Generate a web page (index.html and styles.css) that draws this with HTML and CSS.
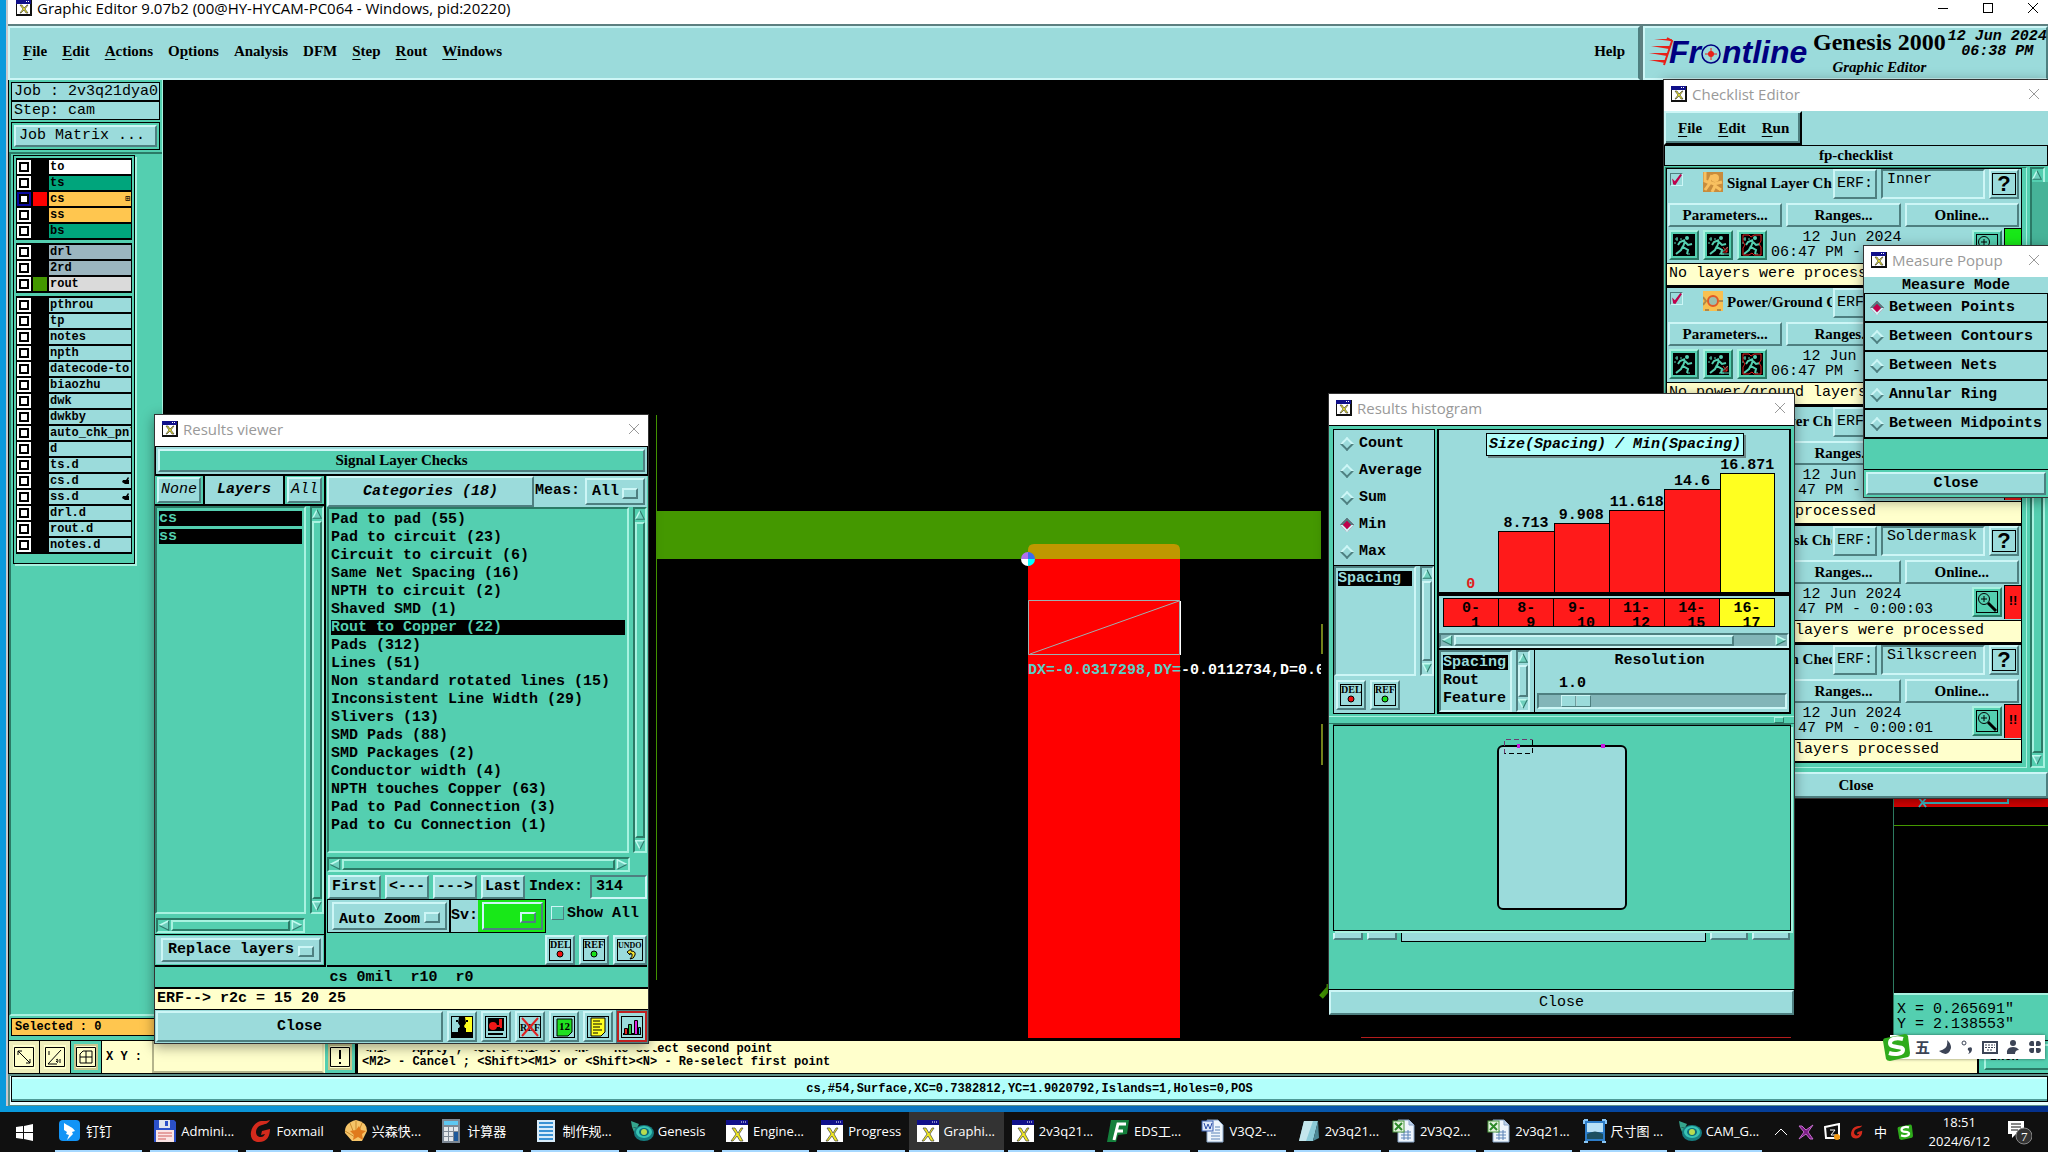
FILE: index.html
```html
<!DOCTYPE html>
<html lang="en">

<head>
    <meta charset="UTF-8">
    <meta name="viewport" content="width=device-width, initial-scale=1.0">
    <title>Graphic Editor 9.07b2</title>

    <link rel="stylesheet" href="styles.css">
</head>

<body>
    <!-- shared icons -->
    <svg class="defs" width="0" height="0">
        <symbol id="i-x" viewBox="0 0 16 16">
            <rect x="0" y="0" width="16" height="16" fill="#111" />
            <rect x="0" y="0" width="15" height="4" fill="#10108a" />
            <path d="M10 1h1v1h-1zM12 1h1v1h-1z" fill="#fff" />
            <rect x="1" y="4" width="13" height="10" fill="#fff" />
            <path d="M4 5h2l2 3 3-3h1L9 9l3 4h-2L8 10l-3 3H4l3-4z" fill="#e8e02a" stroke="#333" stroke-width=".6" />
        </symbol>
        <symbol id="i-close" viewBox="0 0 12 12">
            <path d="M1 1l10 10M11 1L1 11" fill="none" stroke="currentColor" stroke-width="1" />
        </symbol>
        <symbol id="i-up" viewBox="0 0 14 14">
            <path d="M7 1L13 13H1z" fill="#6fd0bd" />
            <path d="M7 1L1 13" fill="none" stroke="#c2fbf0" stroke-width="2" />
            <path d="M7 1L13 13H1" fill="none" stroke="#2f7a6c" stroke-width="1.5" />
        </symbol>
        <symbol id="i-down" viewBox="0 0 14 14">
            <path d="M1 1h12L7 13z" fill="#6fd0bd" />
            <path d="M7 13L1 1h12" fill="none" stroke="#c2fbf0" stroke-width="2" />
            <path d="M13 1L7 13" fill="none" stroke="#2f7a6c" stroke-width="1.5" />
        </symbol>
        <symbol id="i-left" viewBox="0 0 14 14">
            <path d="M1 7L13 1v12z" fill="#6fd0bd" />
            <path d="M1 7L13 1" fill="none" stroke="#c2fbf0" stroke-width="2" />
            <path d="M1 7l12 6V1" fill="none" stroke="#2f7a6c" stroke-width="1.5" />
        </symbol>
        <symbol id="i-right" viewBox="0 0 14 14">
            <path d="M1 1l12 6L1 13z" fill="#6fd0bd" />
            <path d="M13 7L1 1v12" fill="none" stroke="#c2fbf0" stroke-width="2" />
            <path d="M1 13l12-6" fill="none" stroke="#2f7a6c" stroke-width="1.5" />
        </symbol>
        <symbol id="i-run" viewBox="0 0 22 22">
            <rect width="22" height="22" fill="#000" />
            <circle cx="14" cy="4" r="2" fill="#54cfb0" />
            <path d="M12 6l-5 2-2 3M12 7l-2 6 5 3-1 4M10 12l-2 4-5 4M12 8l3 3 4-1" fill="none" stroke="#54cfb0" stroke-width="2" />
            <path d="M2 5h3M4 3v4M1 9h2M7 5h2M14 20h3" stroke="#54cfb0" stroke-width="1" />
        </symbol>
        <symbol id="i-run-part" viewBox="0 0 22 22">
            <use href="#i-run" width="22" height="22" />
            <path d="M12 20h10M13 20l8-7" stroke="#54cfb0" stroke-width="1" />
            <path d="M16 13l4 5M20 13v5h-4" fill="none" stroke="#e02020" stroke-width="1" />
        </symbol>
        <symbol id="i-run-frame" viewBox="0 0 22 22">
            <use href="#i-run" width="22" height="22" />
            <path d="M2 1h6l2 2 3-2h7v6l-2 3 2 3v8h-7l-2-2-3 2H2v-7l2-3-2-3z" fill="none" stroke="#e02020" stroke-width="1" />
        </symbol>
        <symbol id="i-mag" viewBox="0 0 22 22">
            <rect x=".5" y=".5" width="21" height="21" fill="#54cfb0" stroke="#000" />
            <circle cx="8" cy="8" r="5.500" fill="none" stroke="#000" />
            <path d="M5 8h6M8 5v6" stroke="#000" />
            <path d="M12 12l8 8" stroke="#000" stroke-width="3" />
        </symbol>
        <symbol id="i-del" viewBox="0 0 22 22">
            <rect x=".5" y=".5" width="21" height="21" fill="none" stroke="#000" />
            <text x="1" y="9" font-size="10">DEL</text>
            <circle cx="11" cy="15" r="3" fill="#f01010" stroke="#000" />
        </symbol>
        <symbol id="i-ref" viewBox="0 0 22 22">
            <rect x=".5" y=".5" width="21" height="21" fill="none" stroke="#000" />
            <text x="1" y="9" font-size="10">REF</text>
            <circle cx="11" cy="15" r="3" fill="#18e018" stroke="#000" />
        </symbol>
        <symbol id="i-hand" viewBox="0 0 8 8">
            <path d="M1 3h3l2-3 1 1-1 2h1v4H3L0 5z" fill="#000" />
        </symbol>
        <symbol id="i-xapp" viewBox="0 0 24 24">
            <rect x="1" y="1" width="22" height="22" fill="#fff" />
            <rect x="1" y="1" width="22" height="5" fill="#10108a" />
            <path d="M16 3h1M18 3h1M20 3h1" stroke="#fff" />
            <path d="M7 9h3l3 5 3-5h2l-4 6 4 7h-3l-3-5-4 5H6l5-7z" fill="#f0e820" stroke="#444" stroke-width=".7" />
        </symbol>
        <symbol id="i-fox" viewBox="0 0 24 24">
            <path d="M21 1c-2 4-5 4-8 5-4 1-6 4-6 7 0 3 2 5 5 5 2 0 3-1 4-3l-4 1 1-4 8-2c0 7-3 13-11 13C4 23 1 19 2 13 3 7 7 3 12 2c4 0 7 0 9-1z" fill="#d42a1c" />
        </symbol>
        <symbol id="i-gen" viewBox="0 0 24 24">
            <path d="M1 2l8 3-2 4-5-1zM2 8l6 2-4 3z" fill="#35a58c" />
            <ellipse cx="14" cy="14" rx="10" ry="8" fill="#167d80" />
            <ellipse cx="14" cy="13" rx="8" ry="6" fill="#38c4b4" />
            <ellipse cx="14" cy="13" rx="5" ry="4" fill="#0d6a78" />
            <circle cx="14" cy="13" r="3" fill="#b8dc50" />
        </symbol>
        <symbol id="i-xls" viewBox="0 0 24 24">
            <path d="M6 1h11l5 5v17H6z" fill="#eef5fc" stroke="#8aa6c8" />
            <path d="M17 1v5h5" fill="#bdd0e8" stroke="#8aa6c8" />
            <path d="M9 13h10M9 16h10M9 19h10M12 11v10M16 11v10" stroke="#5c84b8" />
            <rect x="1" y="2" width="11" height="11" fill="#e4f3e0" stroke="#4d9a40" />
            <path d="M3 4l7 7M10 4l-7 7" stroke="#2d8a2a" stroke-width="2" />
        </symbol>
        <symbol id="i-sogou" viewBox="0 0 28 28">
            <path d="M4 5l19-4q2 0 3 2l2 17q0 3-2 4L8 28q-3 0-4-2L1 8q0-3 3-3z" fill="#2fab1c" />
            <path d="M21 6C14 4 8 6 8 10c0 6 13 2 13 7 0 4-8 5-14 3" fill="none" stroke="#fff" stroke-width="4" />
        </symbol>
    </svg>

    <main class="desktop">
        <section class="app">
            <header class="app-title">
                <svg class="ico16"><use href="#i-x" /></svg>
                <h1>Graphic Editor 9.07b2 (00@HY-HYCAM-PC064 - Windows, pid:20220)</h1>
                <div class="win-controls">
                    <button aria-label="Minimize"><svg width="12" height="12"><path d="M1 6.500h10" stroke="#000" /></svg></button>
                    <button aria-label="Maximize"><svg width="12" height="12"><rect x="1.500" y="1.500" width="9" height="9" fill="none" stroke="#000" /></svg></button>
                    <button aria-label="Close"><svg width="12" height="12"><use href="#i-close" /></svg></button>
                </div>
            </header>

            <div class="menubar">
                <nav class="menus">
                    <button><u>F</u>ile</button>
                    <button><u>E</u>dit</button>
                    <button><u>A</u>ctions</button>
                    <button>O<u>p</u>tions</button>
                    <button>Analysis</button>
                    <button>DFM</button>
                    <button><u>S</u>tep</button>
                    <button><u>R</u>out</button>
                    <button><u>W</u>indows</button>
                    <button class="help">Help</button>
                </nav>
                <div class="brand">
                    <svg class="logo" width="162" height="32" viewBox="0 0 162 32">
                        <path d="M5 4h18l-1 2zM2 11h19l-1 3zM0 18h19l-1 3zM0 25h17l-1 3z" fill="#e82018" />
                        <path d="M18 3l5 3-8 24" fill="none" stroke="#e82018" stroke-width="2" />
                        <g class="logo-text">
                            <text x="20" y="28">Fr</text>
                            <text x="73" y="28">ntline</text>
                        </g>
                        <circle cx="62" cy="19" r="9" fill="#9bdbdb" stroke="#000080" stroke-width="1.5" />
                        <path d="M62 13v12M56 19h12" stroke="#e82018" />
                        <circle cx="62" cy="19" r="3" fill="#e82018" />
                    </svg>
                    <div class="product">
                        <strong>Genesis 2000</strong>
                        <em>Graphic Editor</em>
                    </div>
                    <time class="clock">12 Jun 2024<br>06:38 PM</time>
                </div>
            </div>

            <div class="workspace">
                <aside class="sidebar">
                    <div class="job">
                        <p>Job : 2v3q21dya0</p>
                        <p>Step: cam</p>
                        <div class="job-matrix"><button>Job Matrix ...</button></div>
                    </div>
                    <div class="layers-pane">
                        <div class="layers">
                            <ul>
                                <li class="white"><input type="checkbox" id="l1"><i></i><label for="l1">to</label></li>
                                <li class="mask"><input type="checkbox" id="l2"><i></i><label for="l2">ts</label></li>
                                <li class="copper work"><input type="checkbox" id="l3" checked><i class="red"></i><label for="l3">cs<span>⊞</span></label></li>
                                <li class="copper"><input type="checkbox" id="l4"><i></i><label for="l4">ss</label></li>
                                <li class="mask"><input type="checkbox" id="l5"><i></i><label for="l5">bs</label></li>
                            </ul>
                            <ul>
                                <li class="drill"><input type="checkbox" id="l6"><i></i><label for="l6">drl</label></li>
                                <li class="drill"><input type="checkbox" id="l7"><i></i><label for="l7">2rd</label></li>
                                <li class="rout"><input type="checkbox" id="l8"><i class="green"></i><label for="l8">rout</label></li>
                            </ul>
                            <ul>
                                <li><input type="checkbox" id="l9"><i></i><label for="l9">pthrou</label></li>
                                <li><input type="checkbox" id="l10"><i></i><label for="l10">tp</label></li>
                                <li><input type="checkbox" id="l11"><i></i><label for="l11">notes</label></li>
                                <li><input type="checkbox" id="l12"><i></i><label for="l12">npth</label></li>
                                <li><input type="checkbox" id="l13"><i></i><label for="l13">datecode-to</label></li>
                                <li><input type="checkbox" id="l14"><i></i><label for="l14">biaozhu</label></li>
                                <li><input type="checkbox" id="l15"><i></i><label for="l15">dwk</label></li>
                                <li><input type="checkbox" id="l16"><i></i><label for="l16">dwkby</label></li>
                                <li><input type="checkbox" id="l17"><i></i><label for="l17">auto_chk_pnl</label></li>
                                <li><input type="checkbox" id="l18"><i></i><label for="l18">d</label></li>
                                <li><input type="checkbox" id="l19"><i></i><label for="l19">ts.d</label></li>
                                <li><input type="checkbox" id="l20"><i></i><label for="l20">cs.d<svg width="8" height="8"><use href="#i-hand" /></svg></label></li>
                                <li><input type="checkbox" id="l21"><i></i><label for="l21">ss.d<svg width="8" height="8"><use href="#i-hand" /></svg></label></li>
                                <li><input type="checkbox" id="l22"><i></i><label for="l22">drl.d</label></li>
                                <li><input type="checkbox" id="l23"><i></i><label for="l23">rout.d</label></li>
                                <li><input type="checkbox" id="l24"><i></i><label for="l24">notes.d</label></li>
                            </ul>
                        </div>
                    </div>
                    <p class="selected">Selected : 0</p>
                </aside>

                <div class="canvas">
                    <svg width="100%" height="100%">
                        <path d="M493.500 335v565" stroke="#449800" />
                        <rect x="493" y="431" width="665" height="48" fill="#449800" />
                        <path d="M865 479v-9q0-6 6-6h140q6 0 6 6v9z" fill="#bf9800" />
                        <rect x="865" y="479" width="152" height="479" fill="#f00" />
                        <path d="M865.500 520.500h151v54h-151z M867 574L1016 521" fill="none" stroke="#9fb0b0" />
                        <path d="M1017.500 521v54" stroke="#fff" />
                        <path d="M865 479h-7a7 7 0 0 1 7-7z" fill="#b070f0" />
                        <path d="M865 479v-7a7 7 0 0 1 7 7z" fill="#3c6cf0" />
                        <path d="M865 479v7a7 7 0 0 1-7-7z" fill="#fff" />
                        <path d="M865 479h7a7 7 0 0 1-7 7z" fill="#00ffff" />
                        <svg x="865" y="570" width="293" height="40">
                            <text class="measure" x="0" y="24"><tspan fill="#5ccfc8">DX=-0.0317298,DY=</tspan><tspan fill="#fff">-0.0112734,D=0.0</tspan></text>
                        </svg>
                        <path d="M1159 544v30M1159 644v41" stroke="#7b8c1c" stroke-width="2" />
                        <path d="M1158 917l8-9v-4" fill="none" stroke="#449800" stroke-width="5" />
                        <path d="M1198 957.500h430" stroke="#b41c1c" />
                    </svg>
                </div>

                <aside class="overview">
                    <svg class="map" width="100%" height="100%">
                        <rect x="0" y="712" width="100%" height="15" fill="#e00000" />
                        <path d="M28 723h86v-6M25 718l7 9M32 718l-7 9" fill="none" stroke="#3fc0cc" stroke-width="2" />
                        <path d="M0 745.500h155" stroke="#449800" />
                    </svg>
                    <p class="coords">X = 0.265691"<br>Y = 2.138553"</p>
                </aside>
            </div>

            <div class="prompt">
                <button class="tool" aria-label="Snap"><svg width="20" height="20"><path d="M.5.5h19v19H.5zM4 4l12 12M4 8V4h4M16 12v4h-4" fill="none" stroke="#000" /></svg></button>
                <button class="tool" aria-label="Angle"><svg width="20" height="20"><path d="M.5.5h19v19H.5zM3 17L16 3M3 17h9M4 4v4M11 13q2-2 2 1t-2 0M15 12v4" fill="none" stroke="#000" /></svg></button>
                <button class="tool on" aria-label="Grid"><svg width="20" height="20"><path d="M.5.5h19v19H.5zM7 4h9v12H4V7zM10 4v12M4 10h12" fill="none" stroke="#000" /></svg></button>
                <label for="xy">X Y :</label>
                <input type="text" id="xy">
                <button class="tool on" aria-label="Alert"><svg width="20" height="20"><path d="M.5.5h19v19H.5z" fill="none" stroke="#000" /><path d="M10 3v9M10 15v2" stroke="#000" stroke-width="2" /></svg></button>
                <p class="message">&lt;M1&gt; - Apply ; &lt;Ctrl&gt;&lt;M1&gt; or &lt;N&gt; - Re-select second point<br>&lt;M2&gt; - Cancel ; &lt;Shift&gt;&lt;M1&gt; or &lt;Shift&gt;&lt;N&gt; - Re-select first point</p>
                <div class="units"><select aria-label="Units"><option>Inch</option></select></div>
            </div>

            <div class="status"><p>cs,#54,Surface,XC=0.7382812,YC=1.9020792,Islands=1,Holes=0,POS</p></div>
        </section>

        <section class="window viewer">
            <header class="win-title">
                <svg class="ico16"><use href="#i-x" /></svg>
                <h2>Results viewer</h2>
                <button aria-label="Close"><svg width="12" height="12"><use href="#i-close" /></svg></button>
            </header>
            <div class="viewer-head"><h3>Signal Layer Checks</h3></div>
            <div class="viewer-body">
                <div class="col-layers">
                    <div class="head">
                        <span><button class="thin">None</button></span>
                        <em>Layers</em>
                        <span><button class="thin">All</button></span>
                    </div>
                    <div class="scroller">
                        <ul class="list">
                            <li class="sel">cs</li>
                            <li class="sel">ss</li>
                        </ul>
                        <div class="vscroll"><svg><use href="#i-up" /></svg><b></b><svg><use href="#i-down" /></svg></div>
                    </div>
                    <div class="hscroll"><svg><use href="#i-left" /></svg><b></b><svg><use href="#i-right" /></svg></div>
                    <div class="replace">
                        <span class="opt"><select aria-label="Layer action"><option>Replace layers</option></select></span>
                    </div>
                </div>
                <div class="col-cats">
                    <div class="head">
                        <button class="cats">Categories (18)</button>
                        <label for="meas">Meas:</label>
                        <span class="opt"><select id="meas"><option>All</option></select></span>
                    </div>
                    <div class="scroller">
                        <ul class="list">
                            <li>Pad to pad (55)</li>
                            <li>Pad to circuit (23)</li>
                            <li>Circuit to circuit (6)</li>
                            <li>Same Net Spacing (16)</li>
                            <li>NPTH to circuit (2)</li>
                            <li>Shaved SMD (1)</li>
                            <li class="sel">Rout to Copper (22)</li>
                            <li>Pads (312)</li>
                            <li>Lines (51)</li>
                            <li>Non standard rotated lines (15)</li>
                            <li>Inconsistent Line Width (29)</li>
                            <li>Slivers (13)</li>
                            <li>SMD Pads (88)</li>
                            <li>SMD Packages (2)</li>
                            <li>Conductor width (4)</li>
                            <li>NPTH touches Copper (63)</li>
                            <li>Pad to Pad Connection (3)</li>
                            <li>Pad to Cu Connection (1)</li>
                        </ul>
                        <div class="vscroll"><svg><use href="#i-up" /></svg><b></b><svg><use href="#i-down" /></svg></div>
                    </div>
                    <div class="hscroll"><svg><use href="#i-left" /></svg><b></b><svg><use href="#i-right" /></svg></div>
                    <div class="nav">
                        <button>First</button>
                        <button>&lt;---</button>
                        <button>---&gt;</button>
                        <button>Last</button>
                        <label for="index">Index:</label>
                        <input type="text" id="index" value="314">
                    </div>
                    <div class="zoom">
                        <span class="opt"><select aria-label="Zoom mode"><option>Auto Zoom</option></select></span>
                        <label for="sv">Sv:</label>
                        <span class="opt lime"><select id="sv"><option></option></select></span>
                        <input type="checkbox" id="showall"><label class="plain" for="showall">Show All</label>
                    </div>
                    <div class="edits">
                        <button aria-label="Delete"><svg width="22" height="22"><use href="#i-del" /></svg></button>
                        <button aria-label="Reference"><svg width="22" height="22"><use href="#i-ref" /></svg></button>
                        <button aria-label="Undo"><svg width="26" height="22"><rect x=".5" y=".5" width="25" height="21" fill="none" stroke="#000" /><text x="1" y="9" font-size="8">UNDO</text><path d="M10 13l4-3v2q5 0 4 4t-5 4q3-3 2-5l-2-1v2z" fill="#f0e030" stroke="#000" /></svg></button>
                    </div>
                </div>
            </div>
            <p class="info">cs 0mil&nbsp; r10&nbsp; r0</p>
            <p class="erf-line">ERF--&gt; r2c = 15 20 25</p>
            <div class="viewer-foot">
                <button class="wide">Close</button>
                <button aria-label="Compare"><svg width="22" height="22"><rect width="22" height="22" /><path d="M1 1h7l-1 6 2 3-1 2H7v4H1z" fill="#9bdbdb" /><path d="M21 1h-7l1 6-2 3 1 2h1v4h6z" fill="#ffff20" /><path d="M5 5h2M15 5h2" stroke="#000" stroke-width="2" /></svg></button>
                <button aria-label="Snapshot"><svg width="22" height="22"><rect x=".5" y=".5" width="21" height="21" fill="#9bdbdb" stroke="#000" /><rect x="3" y="2" width="16" height="13" /><circle cx="8" cy="10" r="4" fill="#f01818" /><path d="M11 10h4V4h1v8" fill="none" stroke="#f01818" stroke-width="2" /><path d="M3 18h15" stroke="#000" stroke-width="2" /></svg></button>
                <button aria-label="Clear reference"><svg width="22" height="22"><rect x=".5" y=".5" width="21" height="21" fill="none" stroke="#000" /><text x="1" y="15" font-size="10">REF</text><path d="M3 2l16 18M19 2L3 20" stroke="#e02020" stroke-width="2" /></svg></button>
                <button aria-label="Count"><svg width="22" height="22"><rect x=".5" y=".5" width="21" height="21" fill="none" stroke="#000" /><path d="M4 3h15v13l-4 4H4z" fill="#20e020" stroke="#000" /><text x="6" y="14" font-size="11" font-weight="bold">12</text></svg></button>
                <button aria-label="Notes"><svg width="22" height="22"><rect x=".5" y=".5" width="21" height="21" fill="none" stroke="#000" /><path d="M4 2h14v14l-4 4H4z" fill="#ffff20" stroke="#000" /><path d="M6 5h7M6 8h9M6 11h7M6 14h9M6 17h5" stroke="#000" /></svg></button>
                <button class="active" aria-label="Histogram"><svg width="22" height="22"><rect x=".5" y=".5" width="21" height="21" fill="#9bdbdb" stroke="#000" /><path d="M2 18h18" stroke="#000" stroke-width="2" /><path d="M3.500 12.500h3v6h-3z" fill="#e02020" stroke="#000" /><path d="M7.500 8.500h3v10h-3z" fill="#20c040" stroke="#000" /><path d="M13.500 4.500h3v14h-3z" fill="#e020e0" stroke="#000" /><path d="M17.500 11.500h2v7h-2z" fill="#30c8e0" stroke="#000" /></svg></button>
            </div>
        </section>

        <section class="window checklist">
            <header class="win-title">
                <svg class="ico16"><use href="#i-x" /></svg>
                <h2>Checklist Editor</h2>
                <button aria-label="Close"><svg width="12" height="12"><use href="#i-close" /></svg></button>
            </header>
            <nav class="check-menu">
                <div>
                    <button><u>F</u>ile</button>
                    <button><u>E</u>dit</button>
                    <button><u>R</u>un</button>
                </div>
            </nav>
            <h3 class="check-name">fp-checklist</h3>
            <div class="check-body">
                <div class="checks">
                    <article class="check">
                        <div class="row-a">
                            <input type="checkbox" id="c1" checked>
                            <svg width="20" height="20"><rect width="20" height="20" fill="#c88c3c" /><path d="M2 0v9l5 2-5 7M9 3l-3 7 5 2 8-2M9 20l3-6 6 4" fill="none" stroke="#f8c060" stroke-width="3" /><circle cx="12" cy="6" r="4" fill="#f8c060" /></svg>
                            <label for="c1">Signal Layer Checks</label>
                            <button>ERF:</button>
                            <input type="text" aria-label="ERF model" value="Inner">
                            <button class="q"><span>?</span></button>
                        </div>
                        <div class="row-b"><button>Parameters...</button><button>Ranges...</button><button>Online...</button></div>
                        <div class="row-c">
                            <button aria-label="Run all"><svg><use href="#i-run" /></svg></button>
                            <button aria-label="Run on features"><svg><use href="#i-run-part" /></svg></button>
                            <button aria-label="Run inside profile"><svg><use href="#i-run-frame" /></svg></button>
                            <p>12 Jun 2024<br>06:47 PM - 0:00:01</p>
                            <button aria-label="View results"><svg><use href="#i-mag" /></svg></button>
                            <span class="flag ok"></span>
                        </div>
                        <p class="report">No layers were processed</p>
                    </article>
                    <article class="check">
                        <div class="row-a">
                            <input type="checkbox" id="c2" checked>
                            <svg width="20" height="20"><rect width="20" height="20" fill="#f8c050" /><circle cx="10" cy="10" r="5" fill="#9bbfae" stroke="#e05a28" stroke-width="2" /><path d="M0 6l3 4-3 4M16 10h4M2 19h4M14 19h4" fill="none" stroke="#b08848" stroke-width="2" /></svg>
                            <label for="c2">Power/Ground Checks</label>
                            <button>ERF:</button>
                            <input type="text" aria-label="ERF model" value="Inner">
                            <button class="q"><span>?</span></button>
                        </div>
                        <div class="row-b"><button>Parameters...</button><button>Ranges...</button><button>Online...</button></div>
                        <div class="row-c">
                            <button aria-label="Run all"><svg><use href="#i-run" /></svg></button>
                            <button aria-label="Run on features"><svg><use href="#i-run-part" /></svg></button>
                            <button aria-label="Run inside profile"><svg><use href="#i-run-frame" /></svg></button>
                            <p>12 Jun 2024<br>06:47 PM - 0:00:01</p>
                            <button aria-label="View results"><svg><use href="#i-mag" /></svg></button>
                            <span class="flag ok"></span>
                        </div>
                        <p class="report">No power/ground layers</p>
                    </article>
                    <article class="check">
                        <div class="row-a">
                            <input type="checkbox" id="c3" checked>
                            <svg width="20" height="20"><rect width="20" height="20" fill="#c88c3c" /></svg>
                            <label for="c3">Signal Layer Checks</label>
                            <button>ERF:</button>
                            <input type="text" aria-label="ERF model" value="Outer">
                            <button class="q"><span>?</span></button>
                        </div>
                        <div class="row-b"><button>Parameters...</button><button>Ranges...</button><button>Online...</button></div>
                        <div class="row-c">
                            <button aria-label="Run all"><svg><use href="#i-run" /></svg></button>
                            <button aria-label="Run on features"><svg><use href="#i-run-part" /></svg></button>
                            <button aria-label="Run inside profile"><svg><use href="#i-run-frame" /></svg></button>
                            <p>12 Jun 2024<br>06:47 PM - 0:00:05</p>
                            <button aria-label="View results"><svg><use href="#i-mag" /></svg></button>
                            <span class="flag bad">!!</span>
                        </div>
                        <p class="report">2 layers were processed</p>
                    </article>
                    <article class="check">
                        <div class="row-a">
                            <input type="checkbox" id="c4" checked>
                            <svg width="20" height="20"><rect width="20" height="20" fill="#00a57c" /></svg>
                            <label for="c4">Solder Mask Checks</label>
                            <button>ERF:</button>
                            <input type="text" aria-label="ERF model" value="Soldermask">
                            <button class="q"><span>?</span></button>
                        </div>
                        <div class="row-b"><button>Parameters...</button><button>Ranges...</button><button>Online...</button></div>
                        <div class="row-c">
                            <button aria-label="Run all"><svg><use href="#i-run" /></svg></button>
                            <button aria-label="Run on features"><svg><use href="#i-run-part" /></svg></button>
                            <button aria-label="Run inside profile"><svg><use href="#i-run-frame" /></svg></button>
                            <p>12 Jun 2024<br>06:47 PM - 0:00:03</p>
                            <button aria-label="View results"><svg><use href="#i-mag" /></svg></button>
                            <span class="flag bad">!!</span>
                        </div>
                        <p class="report">2 solder mask layers were processed</p>
                    </article>
                    <article class="check">
                        <div class="row-a">
                            <input type="checkbox" id="c5" checked>
                            <svg width="20" height="20"><rect width="20" height="20" fill="#fff" /></svg>
                            <label for="c5">Silk Screen Checks</label>
                            <button>ERF:</button>
                            <input type="text" aria-label="ERF model" value="Silkscreen">
                            <button class="q"><span>?</span></button>
                        </div>
                        <div class="row-b"><button>Parameters...</button><button>Ranges...</button><button>Online...</button></div>
                        <div class="row-c">
                            <button aria-label="Run all"><svg><use href="#i-run" /></svg></button>
                            <button aria-label="Run on features"><svg><use href="#i-run-part" /></svg></button>
                            <button aria-label="Run inside profile"><svg><use href="#i-run-frame" /></svg></button>
                            <p>12 Jun 2024<br>06:47 PM - 0:00:01</p>
                            <button aria-label="View results"><svg><use href="#i-mag" /></svg></button>
                            <span class="flag bad">!!</span>
                        </div>
                        <p class="report">2 silk screen layers processed</p>
                    </article>
                </div>
                <div class="vscroll"><svg><use href="#i-up" /></svg><b class="start"></b><b></b><svg><use href="#i-down" /></svg></div>
            </div>
            <button class="wide">Close</button>
        </section>

        <section class="window measure-popup">
            <header class="win-title">
                <svg class="ico16"><use href="#i-x" /></svg>
                <h2>Measure Popup</h2>
                <button aria-label="Close"><svg width="12" height="12"><use href="#i-close" /></svg></button>
            </header>
            <h3>Measure Mode</h3>
            <label><input type="radio" name="mode" checked>Between Points</label>
            <label><input type="radio" name="mode">Between Contours</label>
            <label><input type="radio" name="mode">Between Nets</label>
            <label><input type="radio" name="mode">Annular Ring</label>
            <label><input type="radio" name="mode">Between Midpoints</label>
            <div class="popup-foot"><button>Close</button></div>
        </section>

        <section class="window histogram">
            <header class="win-title">
                <svg class="ico16"><use href="#i-x" /></svg>
                <h2>Results histogram</h2>
                <button aria-label="Close"><svg width="12" height="12"><use href="#i-close" /></svg></button>
            </header>
            <div class="hist-top">
                <div class="hist-side">
                    <div class="stats">
                        <label><input type="radio" name="stat">Count</label>
                        <label><input type="radio" name="stat">Average</label>
                        <label><input type="radio" name="stat">Sum</label>
                        <label><input type="radio" name="stat" checked>Min</label>
                        <label><input type="radio" name="stat">Max</label>
                    </div>
                    <div class="scroller">
                        <ul class="list"><li class="sel">Spacing</li></ul>
                        <div class="vscroll"><svg><use href="#i-up" /></svg><b></b><svg><use href="#i-down" /></svg></div>
                    </div>
                    <div class="edits">
                        <button aria-label="Delete"><svg width="22" height="22"><use href="#i-del" /></svg></button>
                        <button aria-label="Reference"><svg width="22" height="22"><use href="#i-ref" /></svg></button>
                    </div>
                </div>
                <div class="hist-main">
                    <h3>Size(Spacing) / Min(Spacing)</h3>
                    <div class="bars">
                        <div class="zero"><span>0</span><i style="height: 0"></i></div>
                        <div><span>8.713</span><i style="height: 61px"></i></div>
                        <div><span>9.908</span><i style="height: 69px"></i></div>
                        <div><span>11.618</span><i style="height: 82px"></i></div>
                        <div><span>14.6</span><i style="height: 103px"></i></div>
                        <div class="top"><span>16.871</span><i style="height: 119px"></i></div>
                    </div>
                    <div class="bins">
                        <div><pre>0-
 1</pre></div>
                        <div><pre>8-
 9</pre></div>
                        <div><pre>9-
 10</pre></div>
                        <div><pre>11-
 12</pre></div>
                        <div><pre>14-
 15</pre></div>
                        <div class="top"><pre>16-
 17</pre></div>
                    </div>
                    <div class="hscroll pale"><svg><use href="#i-left" /></svg><b></b><svg><use href="#i-right" /></svg></div>
                    <div class="hist-opts">
                        <ul class="list">
                            <li class="sel">Spacing</li>
                            <li>Rout</li>
                            <li>Feature</li>
                        </ul>
                        <div class="vscroll"><svg><use href="#i-up" /></svg><b></b><svg><use href="#i-down" /></svg></div>
                        <div class="resolution">
                            <label for="res">Resolution</label>
                            <output for="res">1.0</output>
                            <input type="range" id="res" min="0" max="10" value="1">
                        </div>
                    </div>
                </div>
            </div>
            <div class="sash"><i></i></div>
            <div class="board">
                <svg width="130" height="170">
                    <rect x="1" y="5" width="128" height="163" rx="5" fill="#9bdbdb" stroke="#000" stroke-width="2" />
                </svg>
                <svg class="focus" width="40" height="24">
                    <path d="M7.500 16V1.500h28" fill="none" stroke="#6b3a70" stroke-dasharray="5 3" />
                    <path d="M35.500 2v13.500h-28" fill="none" stroke="#000" stroke-dasharray="5 3" />
                    <rect x="20" y="6" width="3" height="4" fill="#c818e0" />
                </svg>
                <i class="dot"></i>
            </div>
            <div class="stubs"><i></i><i></i><b></b><i></i><i></i></div>
            <button class="wide">Close</button>
        </section>

        <div class="ime">
            <svg width="28" height="28"><use href="#i-sogou" /></svg>
            <span>五</span>
            <svg width="14" height="16"><path d="M9 1q2 9-8 11 9 7 12-3 0-5-4-8z" fill="#3c4456" /></svg>
            <svg width="14" height="16"><circle cx="4" cy="4" r="2" fill="none" stroke="#3c4456" /><path d="M8 9q4-2 4 1 0 4-4 5 2-2 1-3-2-1-1-3z" fill="#3c4456" /></svg>
            <svg width="16" height="16"><rect x="1" y="3" width="14" height="11" fill="none" stroke="#3c4456" stroke-width="2" /><path d="M3 6h10M3 8.500h10M5 11h6" stroke="#3c4456" stroke-dasharray="2 1" stroke-width="1" /></svg>
            <svg width="14" height="16"><circle cx="7" cy="4" r="3" fill="#3c4456" /><path d="M1 15q-1-7 6-7 4 0 6 3-4 0-4 4z" fill="#3c4456" /></svg>
            <svg width="14" height="16"><path d="M3 2h2q1 0 1 2v3H3Q1 7 1 5t2-3zM11 2H9Q8 2 8 4v3h3q2 0 2-2t-2-3zM3 14h2q1 0 1-2V9H3q-2 0-2 2t2 3zM11 14H9q-1 0-1-2V9h3q2 0 2 2t-2 3z" fill="#3c4456" /></svg>
        </div>
    </main>

    <footer class="taskbar">
        <button class="start" aria-label="Start"><svg width="17" height="17"><path d="M0 3l7-1v6H0zM8 2l9-2v8H8zM0 9h7v6l-7-1zM8 9h9v8l-9-2z" fill="#fff" /></svg></button>
        <div class="tasks">
            <button><svg viewBox="0 0 24 24"><rect x="1" y="1" width="21" height="21" rx="4" fill="#1294f6" /><path d="M6 4c4 3 9 4 11 8l-3 1 1 2-6 6 2-5-3-1 1-2-3-2z" fill="#fff" /></svg><span>钉钉</span></button>
            <button><svg viewBox="0 0 24 24"><path d="M1 1h20l2 2v20H1z" fill="#2b50c8" /><rect x="6" y="1" width="11" height="8" fill="#dfe4ee" /><rect x="12" y="2" width="3" height="5" fill="#2b50c8" /><rect x="3" y="11" width="18" height="12" fill="#fbe4e4" /><path d="M5 14h14M5 17h14M5 20h8" stroke="#d05c5c" /></svg><span>Admini...</span></button>
            <button><svg viewBox="0 0 24 24"><use href="#i-fox" /></svg><span>Foxmail</span></button>
            <button><svg viewBox="0 0 24 24"><path d="M12 1q11 2 11 11l-5 10H8L1 14Q0 4 12 1z" fill="#f6c468" /><path d="M12 2v14M6 4l5 13M18 4l-5 13M1 12l10 6" stroke="#c98a2c" /><path d="M15 7l2 4 5 1-4 3 1 6-5-3-5 3 1-5-4-4 6-1z" fill="#e07a1c" /></svg><span>兴森快...</span></button>
            <button><svg viewBox="0 0 24 24"><rect x="3" y="0" width="18" height="24" fill="#7d8894" /><rect x="5" y="2" width="14" height="4" fill="#5ec8f2" /><path d="M5 8h4v4H5zM10 8h4v4h-4zM15 8h4v4h-4zM5 13h4v4H5zM10 13h4v4h-4zM5 18h4v4H5zM10 18h4v4h-4z" fill="#e4e8ec" /><path d="M15 13h4v9h-4z" fill="#1f5a9c" /></svg><span>计算器</span></button>
            <button><svg viewBox="0 0 24 24"><rect x="3" y="1" width="18" height="22" fill="#d8ecfa" /><path d="M5 4h14M5 8h14M5 12h14M5 16h14M5 20h14" stroke="#3a92d4" stroke-width="2" /></svg><span>制作规...</span></button>
            <button><svg viewBox="0 0 24 24"><use href="#i-gen" /></svg><span>Genesis</span></button>
            <button><svg viewBox="0 0 24 24"><use href="#i-xapp" /></svg><span>Engine...</span></button>
            <button><svg viewBox="0 0 24 24"><use href="#i-xapp" /></svg><span>Progress</span></button>
            <button class="current"><svg viewBox="0 0 24 24"><use href="#i-xapp" /></svg><span>Graphi...</span></button>
            <button><svg viewBox="0 0 24 24"><use href="#i-xapp" /></svg><span>2v3q21...</span></button>
            <button><svg viewBox="0 0 24 24"><path d="M5 1h18l-2 14-9 1-2 7H1z" fill="#14803c" /><path d="M8 21l4-16h8M10 12h7" fill="none" stroke="#fff" stroke-width="3" /></svg><span>EDS工...</span></button>
            <button><svg viewBox="0 0 24 24"><path d="M6 1h11l5 5v17H6z" fill="#eef5fc" stroke="#8aa6c8" /><path d="M10 14h9M10 17h9M10 20h9M14 8h5M14 11h5" stroke="#5c84b8" /><rect x="1" y="2" width="11" height="10" fill="#dfe9fa" stroke="#3d63b4" /><path d="M3 4l2 6 2-5 2 5 2-6" fill="none" stroke="#2c4ea8" /></svg><span>V3Q2-...</span></button>
            <button><svg viewBox="0 0 24 24"><path d="M7 2h14l-5 20H2z" fill="#8ccbd8" /><path d="M7 2h9L9 22H2z" fill="#c4e6ec" /><path d="M21 2l1 17-6 3z" fill="#4d8896" /></svg><span>2v3q21...</span></button>
            <button><svg viewBox="0 0 24 24"><use href="#i-xls" /></svg><span>2V3Q2...</span></button>
            <button><svg viewBox="0 0 24 24"><use href="#i-xls" /></svg><span>2v3q21...</span></button>
            <button><svg viewBox="0 0 24 24"><rect x="2" y="2" width="20" height="20" fill="#2c7cc8" /><rect x="4" y="4" width="16" height="9" fill="#b8e0f6" /><path d="M4 15q8-5 16 0v5H4z" fill="#1d4f60" /><path d="M1 1h4M1 1v4M23 1h-4M23 1v4M1 23h4M23 23h-4" stroke="#8ac6f4" stroke-width="2" /></svg><span>尺寸图 ...</span></button>
            <button><svg viewBox="0 0 24 24"><use href="#i-gen" /></svg><span>CAM_G...</span></button>
        </div>
        <div class="tray">
            <svg width="14" height="16"><path d="M1 11l6-6 6 6" fill="none" stroke="#fff" /></svg>
            <svg width="16" height="16"><path d="M1 2h3l4 4 7-5-5 7 5 7h-3l-4-5-7 5 5-7z" fill="#7c1d86" stroke="#c46ccc" /></svg>
            <svg width="17" height="18"><path d="M1 4l14-3v14H2z" fill="none" stroke="#fff" stroke-width="2" /><path d="M6 7h5l-4 5h5" fill="none" stroke="#fff" /><circle cx="13" cy="14" r="3" fill="#f49a14" /></svg>
            <svg width="14" height="16" viewBox="0 0 24 24"><use href="#i-fox" /></svg>
            <span>中</span>
            <svg width="16" height="16" viewBox="0 0 28 28"><use href="#i-sogou" /></svg>
            <time>18:51<br>2024/6/12</time>
            <button aria-label="Notifications"><svg width="26" height="26"><path d="M2 2h16v13h-8l-4 4v-4H2z" fill="#fff" /><path d="M5 5h10M5 8h10M5 11h7" stroke="#111" /><circle cx="18" cy="17" r="8" fill="#333" stroke="#888" /><text x="15" y="22" fill="#fff" font-size="13">7</text></svg></button>
        </div>
    </footer>
</body>

</html>
```
FILE: styles.css
```css
* {
    box-sizing: border-box;
}

:root {
    --teal: #54cfb0;
    --teal-light: #a8f2e0;
    --teal-dark: #2b7a66;
    --face: #9bdbdb;
    --light: #cdf6f6;
    --dark: #4e7f80;
    --cream: #ffffcc;
    --mono: "Liberation Mono", "Courier New", monospace;
    --serif: "Liberation Serif", "Times New Roman", serif;
    --ui: "Open Sans", "Noto Sans CJK SC", sans-serif;
}

body {
    margin: 0;
    height: 100vh;
    display: flex;
    flex-direction: column;
    overflow: hidden;
    font: bold 15px/18px var(--mono);
    color: #000;
}

h1, h2, h3, p, ul, pre {
    margin: 0;
    padding: 0;
    font: inherit;
}

ul {
    list-style: none;
}

svg {
    display: block;
    flex: none;
}

svg text {
    font-family: var(--serif);
}

.defs {
    position: absolute;
}

button, input, select {
    font: inherit;
    color: inherit;
    margin: 0;
    padding: 0;
    border-radius: 0;
    background: var(--face);
    border: 2px solid;
    border-color: var(--light) var(--dark) var(--dark) var(--light);
    appearance: none;
}

input[type="text"] {
    min-width: 0;
    border-color: var(--dark) var(--light) var(--light) var(--dark);
}

u {
    text-underline-offset: 3px;
    text-decoration-thickness: 1px;
}

.ico16 {
    width: 16px;
    height: 16px;
}

.desktop {
    flex: 1;
    min-height: 0;
    position: relative;
    display: flex;
    overflow: hidden;
    background: linear-gradient(90deg, #0a9adc, #0a8ed0 30%, #0650a8 70%, #04308c);
}

/* main editor window */
.app {
    flex: 1;
    min-width: 0;
    margin: 0 0 6px 8px;
    display: flex;
    flex-direction: column;
    background: var(--teal);
    box-shadow: -2px 0 0 #c8c8cc;
}

.app-title {
    height: 24px;
    padding: 0 9px 9px 8px;
    display: flex;
    align-items: center;
    gap: 5px;
    background: #fff;
}

.app-title h1 {
    flex: 1;
    font: 15px/16px var(--ui);
}

.win-controls {
    display: flex;
    gap: 33px;
}

.win-controls button,
.win-title button {
    border: 0;
    background: none;
}

.menubar {
    height: 56px;
    display: flex;
    gap: 3px;
    border-top: 2px solid #5d7f80;
    background: #5d7f80;
}

.menus,
.brand {
    display: flex;
    align-items: center;
    padding-bottom: 5px;
    background: var(--face);
    border: 2px solid;
    border-color: var(--light) var(--dark) var(--light) var(--light);
}

.menus {
    flex: 1;
    padding-left: 6px;
    padding-right: 5px;
    font: bold 15px/18px var(--serif);
}

.menus button,
.check-menu button {
    padding: 0 8px;
    border: 0;
    background: none;
}

.menus button {
    padding-left: 7px;
}

.menus .help {
    margin-left: auto;
}

.brand {
    width: 405px;
    padding-left: 4px;
    gap: 2px;
}

.logo-text text {
    font: italic bold 32px "Liberation Sans", Arial, sans-serif;
    fill: #000080;
}

.product {
    width: 136px;
    text-align: center;
    font: bold 15px/18px var(--serif);
}

.product strong {
    display: block;
    white-space: nowrap;
    font-size: 24px;
    line-height: 32px;
}

.clock {
    flex: 1;
    align-self: flex-start;
    font: italic bold 15px/15px var(--mono);
    padding-top: 1px;
    text-align: center;
    white-space: nowrap;
}

.workspace {
    flex: 1;
    min-height: 0;
    display: flex;
}

.sidebar {
    width: 155px;
    display: flex;
    flex-direction: column;
    border-left: 1px solid #000;
    border-right: 1px solid var(--teal-light);
}

.job {
    padding: 2px;
    border-bottom: 2px solid var(--teal-dark);
    font-weight: normal;
}

.job p {
    height: 19px;
    padding-left: 2px;
    border: 1px solid #000;
    background: var(--face);
    font-size: 15px;
    line-height: 18px;
    white-space: nowrap;
}

.job-matrix {
    margin-top: 2px;
    padding: 2px;
    border: 1px solid #000;
}

.job-matrix button {
    width: 100%;
    height: 22px;
    padding-left: 3px;
    text-align: left;
}

.layers-pane {
    flex: 1;
    border-left: 2px solid var(--teal-dark);
    border-bottom: 2px solid var(--teal-light);
}

.layers {
    width: 122px;
    margin: 1px 0 0 2px;
    padding: 2px 2px 9px;
    border: 1px solid #000;
    box-shadow: 2px 2px 0 var(--teal-light);
    font-size: 12px;
    line-height: 14px;
}

.layers ul {
    display: flex;
    flex-direction: column;
    gap: 2px;
    padding: 2px 1px;
    margin-bottom: 3px;
    background: #000;
}

.layers ul:last-child {
    margin-bottom: 0;
}

.layers li {
    display: flex;
    height: 14px;
    gap: 2px;
}

.layers input {
    flex: none;
    width: 14px;
    height: 14px;
    border: 2px solid #fff;
    background: #fff;
    box-shadow: inset 0 0 0 2px #000;
}

.layers .work input {
    border-color: #0a0aa0;
}

.layers i {
    width: 14px;
}

.layers .red {
    background: #f00;
}

.layers .green {
    background: #449800;
}

.layers label {
    flex: 1;
    display: flex;
    align-items: center;
    padding: 0 1px;
    background: var(--face);
    white-space: nowrap;
    overflow: hidden;
}

.layers label span,
.layers label svg {
    margin-left: auto;
    font-size: 8px;
}

.layers .white label { background: #fff; }
.layers .mask label { background: #00a57c; }
.layers .copper label { background: #ffc64f; }
.layers .drill label { background: #9bb5bf; }
.layers .rout label { background: #dadada; }

.selected {
    margin: 2px 2px 4px;
    height: 18px;
    padding-left: 3px;
    border: 1px solid #000;
    background: #ffc64f;
    font-size: 12px;
    line-height: 16px;
}

.canvas {
    flex: 1;
    min-width: 0;
    overflow: hidden;
    background: #000;
}

.canvas .measure {
    font: bold 15px var(--mono);
}

.overview {
    width: 155px;
    display: flex;
    flex-direction: column;
    border-left: 1px solid #2d7a60;
    background: #000;
}

.overview .map {
    flex: 1;
    min-height: 0;
}

.coords {
    height: 47px;
    padding: 7px 3px;
    border-top: 2px solid var(--teal-light);
    background: var(--teal);
    font-weight: normal;
    line-height: 15px;
}

.prompt {
    height: 34px;
    display: flex;
    align-items: stretch;
    border: solid #000;
    border-width: 1px 0 1px 1px;
    background: var(--cream);
    font-size: 12px;
}

.prompt .tool {
    width: 31px;
    padding: 2px;
    border: 1px solid #000;
    border-width: 0 1px 0 0;
    background: var(--cream);
    display: flex;
    align-items: center;
    justify-content: center;
    box-shadow: inset 0 0 0 4px #eeeebb;
}

.prompt .on {
    box-shadow: inset 0 0 0 3px var(--teal), inset 0 0 0 5px #c8c890;
}

.prompt label {
    width: 50px;
    padding-left: 4px;
    line-height: 32px;
}

.prompt input {
    width: 172px;
    background: var(--cream);
    border-color: #b4b48c #eeeebb #b4b48c #b4b48c;
    margin-right: 1px;
}

.message {
    position: relative;
    flex: 1;
    padding: 2px 4px;
    border-left: 2px solid #000;
    line-height: 13px;
    white-space: nowrap;
}

.message::before {
    content: "";
    position: absolute;
    left: 0;
    top: 0;
    width: 298px;
    height: 9px;
    background: var(--cream);
}

.units {
    width: 71px;
    padding: 3px 0 3px 5px;
    border-left: 2px solid #000;
    background: var(--teal);
}

.units select {
    width: 80px;
    height: 26px;
    background: var(--teal);
    border-color: var(--teal-light) var(--teal-dark) var(--teal-dark) var(--teal-light);
    padding-left: 4px;
}

.status {
    height: 32px;
    padding: 0 0 2px 1px;
    border: solid #5d8f88;
    border-width: 2px 0 1px 2px;
    background: #e8ffff;
}

.status p {
    height: 26px;
    border: 1px solid #000;
    background: #b2fffb;
    box-shadow: inset 0 -2px 0 #4e9a96, inset 0 2px 0 #d8fffe;
    text-align: center;
    font-size: 12px;
    line-height: 24px;
}

/* floating windows */
.window {
    position: absolute;
    display: flex;
    flex-direction: column;
    background: var(--teal);
    border: 1px solid #333;
    box-shadow: 0 3px 12px rgba(0, 0, 0, 0.4);
}

.win-title {
    flex: none;
    height: 31px;
    padding: 0 8px 4px 7px;
    display: flex;
    align-items: center;
    gap: 5px;
    background: #fff;
    color: #999;
}

.win-title h2 {
    flex: 1;
    font: 15px/20px var(--ui);
}

.wide {
    border-color: var(--light) var(--dark) var(--dark) var(--light);
}

.list {
    flex: 1;
    min-width: 0;
    padding: 3px 2px;
    border: 2px solid;
    border-color: var(--teal-dark) var(--teal-light) var(--teal-light) var(--teal-dark);
}

.list li {
    height: 15px;
    margin-bottom: 3px;
    line-height: 15px;
    white-space: nowrap;
}

.list .sel {
    background: #000;
    color: var(--teal);
}

.scroller {
    flex: 1;
    min-height: 0;
    display: flex;
    gap: 4px;
}

.vscroll,
.hscroll {
    flex: none;
    display: flex;
    gap: 1px;
    border: 2px solid;
    border-color: var(--teal-dark) var(--teal-light) var(--teal-light) var(--teal-dark);
}

.vscroll {
    flex-direction: column;
    width: 14px;
}

.vscroll svg {
    width: 10px;
    height: 12px;
}

.hscroll {
    height: 15px;
}

.hscroll svg {
    width: 12px;
    height: 11px;
}

.vscroll b,
.hscroll b {
    flex: 1;
    background: var(--teal);
    border: 2px solid;
    border-color: var(--teal-light) var(--teal-dark) var(--teal-dark) var(--teal-light);
}

.opt {
    position: relative;
    display: flex;
    padding: 2px;
    background: var(--face);
}

.opt select {
    width: 100%;
    padding: 0 24px 0 5px;
}

.opt::after {
    content: "";
    position: absolute;
    right: 9px;
    top: 50%;
    width: 12px;
    height: 7px;
    margin-top: -4px;
    border: 2px solid;
    border-color: var(--light) var(--dark) var(--dark) var(--light);
}

.edits {
    display: flex;
}

.edits button {
    padding: 2px;
}

/* results viewer */
.viewer {
    left: 154px;
    top: 414px;
    width: 495px;
    height: 630px;
}

.viewer-head {
    height: 29px;
    padding: 2px;
    border: 1px solid #000;
    background: var(--face);
}

.viewer-head h3 {
    height: 23px;
    border: 2px solid;
    border-color: var(--light) var(--dark) var(--dark) var(--light);
    background: var(--teal);
    text-align: center;
    font: bold 15px/18px var(--serif);
}

.viewer-body {
    flex: 1;
    min-height: 0;
    display: flex;
}

.col-layers {
    width: 171px;
    display: flex;
    flex-direction: column;
    border-right: 2px solid #000;
    border-top: 1px solid #000;
}

.col-cats {
    flex: 1;
    min-width: 0;
    display: flex;
    flex-direction: column;
    padding: 0 1px;
    border-top: 1px solid #000;
}

.head {
    height: 31px;
    display: flex;
    font-style: italic;
}

.col-layers .head {
    height: 30px;
    border-bottom: 2px solid #000;
}

.col-layers .head span {
    padding: 1px 2px;
    display: flex;
}

.thin {
    padding: 0 2px;
    font-weight: normal;
    font-style: italic;
}

.col-layers .head em {
    flex: 1;
    border: solid #000;
    border-width: 0 2px;
    background: var(--face);
    text-align: center;
    line-height: 28px;
}

.cats {
    width: 207px;
    font-style: italic;
}

.col-cats .head label {
    width: 49px;
    padding-left: 1px;
    font-style: normal;
    line-height: 30px;
    background: var(--face);
}

.col-cats .head .opt {
    flex: 1;
    font-style: normal;
}

.col-layers .hscroll {
    margin: 4px 19px 1px 1px;
}

.replace {
    height: 33px;
    padding: 1px;
    border: solid #000;
    border-width: 1px 0 2px;
    display: flex;
}

.replace .opt {
    flex: 1;
    padding-left: 5px;
}

.col-cats .hscroll {
    margin: 4px 17px 3px 0;
}

.nav {
    height: 24px;
    display: flex;
    gap: 4px;
    padding-left: 1px;
}

.nav button {
    width: 44px;
    white-space: nowrap;
}

.nav button:first-child {
    width: 53px;
}

.nav label {
    margin-right: 3px;
    line-height: 24px;
}

.nav input {
    flex: 1;
    padding-left: 4px;
    background: var(--teal);
}

.zoom {
    height: 34px;
    display: flex;
    align-items: center;
}

.zoom .opt,
.zoom label {
    height: 34px;
    border: 1px solid #000;
    background: var(--face);
    line-height: 32px;
}

.zoom .opt {
    width: 123px;
    padding-left: 4px;
}

.zoom label {
    width: 28px;
    border-right: 0;
}

.zoom .lime {
    width: 68px;
    padding-left: 4px;
    border-left: 0;
    background: #18e818;
}

.lime select {
    background: #18e818;
}

.zoom input {
    width: 13px;
    height: 14px;
    margin: 0 3px 6px 5px;
    border-width: 1px;
    background: var(--teal);
}

.zoom .plain {
    flex: 1;
    border: 0;
    background: none;
    line-height: 29px;
}

.viewer .edits {
    height: 34px;
    padding-top: 2px;
    gap: 4px;
    justify-content: flex-end;
    border-bottom: 2px solid #000;
}

.info {
    height: 22px;
    text-align: center;
    line-height: 22px;
    border-bottom: 2px solid #000;
    white-space: nowrap;
}

.erf-line {
    height: 21px;
    padding-left: 2px;
    background: var(--cream);
    border-bottom: 1px solid #000;
    line-height: 20px;
}

.viewer-foot {
    height: 33px;
    padding: 1px;
    display: flex;
    gap: 4px;
    background: var(--face);
}

.viewer-foot .wide {
    flex: 1;
}

.viewer-foot button {
    padding: 2px;
}

.viewer-foot .active {
    border-color: #c02020;
    box-shadow: 0 0 0 1px var(--dark);
}

/* checklist editor */
.checklist {
    right: 0;
    top: 79px;
    width: 385px;
    height: 720px;
    border-right: 0;
}

.check-menu {
    height: 34px;
    background: var(--face);
    font: bold 15px/18px var(--serif);
}

.check-menu div {
    width: 138px;
    height: 34px;
    padding-left: 4px;
    display: flex;
    align-items: center;
    border: 2px solid;
    border-color: var(--light) #000 #000 var(--light);
    box-shadow: inset -2px -2px 0 var(--dark);
}

.check-name {
    height: 21px;
    border: 1px solid #000;
    background: var(--face);
    text-align: center;
    font: bold 15px/19px var(--serif);
}

.check-body {
    flex: 1;
    min-height: 0;
    display: flex;
    gap: 3px;
    padding: 1px 3px 4px 1px;
}

.checks {
    flex: 1;
    min-width: 0;
    padding-right: 4px;
    border: 1px solid;
    border-color: var(--teal-dark) var(--teal-light) var(--teal-light) var(--teal-dark);
}

.check {
    height: 119px;
    display: flex;
    flex-direction: column;
    background: var(--face);
    border: solid #000;
    border-width: 1px 1px 2px;
    font-weight: normal;
}

.row-a {
    height: 30px;
    margin-right: 2px;
    display: flex;
    gap: 4px;
}

.row-a > svg {
    margin: 3px 0 0 16px;
}

.row-a label {
    flex: 1;
    min-width: 0;
    margin-right: -3px;
    overflow: hidden;
    white-space: nowrap;
    font: bold 15px/28px var(--serif);
}

.row-a input[type="checkbox"] {
    width: 13px;
    height: 13px;
    margin: 4px 0 0 3px;
    border-width: 1px;
    border-color: var(--dark) var(--light) var(--light) var(--dark);
}

.row-a input[type="checkbox"]::before {
    content: "";
    display: block;
    height: 11px;
    background: #c0004c;
    clip-path: polygon(10% 40%, 35% 65%, 85% 0, 100% 10%, 40% 100%, 20% 95%);
}

.row-a button {
    width: 44px;
}

.row-a input[type="text"] {
    width: 104px;
    padding: 0 0 8px 4px;
    line-height: 16px;
}

.row-a .q {
    width: 30px;
    padding: 1px;
    font: bold 22px/20px "Liberation Sans", sans-serif;
}

.q span {
    display: block;
    border: 1px solid #000;
}

.row-b {
    margin: 4px 2px 0 1px;
    height: 24px;
    display: flex;
    gap: 4px;
    font: bold 15px/18px var(--serif);
}

.row-b button {
    flex: 1;
}

.row-c {
    height: 36px;
    margin-left: 2px;
    display: flex;
    align-items: center;
    gap: 4px;
}

.row-c button {
    width: 30px;
    height: 30px;
    padding: 2px;
    background: var(--teal);
    border-color: var(--teal-light) var(--teal-dark) var(--teal-dark) var(--teal-light);
}

.row-c button svg {
    width: 22px;
    height: 22px;
}

.row-c p {
    margin-right: auto;
    text-align: center;
    line-height: 15px;
    white-space: nowrap;
}

.row-c .flag {
    width: 17px;
    height: 34px;
    margin-left: -2px;
    border: 1px solid #000;
    border-width: 1px 0 0 1px;
    text-align: center;
    font: bold 13px/30px "Liberation Sans", sans-serif;
}

.ok {
    background: #18e818;
}

.bad {
    background: #ff1a1a;
}

.report {
    flex: 1;
    padding-left: 2px;
    border-top: 1px solid #000;
    background: var(--cream);
    line-height: 20px;
    white-space: nowrap;
    overflow: hidden;
}

.check-body .vscroll {
    width: 15px;
}

.check-body .vscroll .start {
    background: #46b398;
    border: 0;
}

.checklist > .wide {
    height: 26px;
    font: bold 15px/18px var(--serif);
}

/* measure popup */
.measure-popup {
    right: 0;
    top: 245px;
    width: 185px;
    height: 253px;
    border-right: 0;
}

.measure-popup h3 {
    height: 17px;
    border-bottom: 1px solid #000;
    background: var(--face);
    text-align: center;
    line-height: 17px;
}

.measure-popup label,
.stats label {
    display: flex;
    align-items: center;
    white-space: nowrap;
}

.measure-popup label {
    height: 29px;
    padding-left: 7px;
    gap: 7px;
    background: var(--face);
    border: solid #000;
    border-width: 0 1px 2px;
}

input[type="radio"] {
    flex: none;
    width: 10px;
    height: 10px;
    transform: rotate(45deg);
    border-color: var(--light) var(--dark) var(--dark) var(--light);
}

input[type="radio"]:checked {
    background: #c0004c;
    border-color: var(--dark) var(--light) var(--light) var(--dark);
}

.popup-foot {
    margin-top: auto;
    height: 28px;
    padding: 2px;
    border-top: 1px solid #000;
    display: flex;
}

.popup-foot button {
    flex: 1;
}

/* histogram */
.histogram {
    right: 253px;
    top: 393px;
    width: 467px;
    height: 623px;
}

.histogram .list,
.histogram .vscroll,
.histogram .hscroll {
    border-color: var(--dark) var(--light) var(--light) var(--dark);
}

.histogram .vscroll b,
.histogram .hscroll b {
    flex: 1;
    background: var(--face);
    border-color: var(--light) var(--dark) var(--dark) var(--light);
}

.hist-top {
    height: 291px;
    padding: 3px 3px 2px 4px;
    border-top: 1px solid #000;
    display: flex;
    gap: 2px;
}

.hist-side {
    width: 102px;
    display: flex;
    flex-direction: column;
    border: 1px solid #000;
    background: var(--face);
}

.stats {
    height: 136px;
    padding-left: 8px;
    border-bottom: 1px solid #000;
}

.stats label {
    height: 27px;
    gap: 7px;
}

.hist-side .list .sel,
.hist-opts .list .sel {
    color: var(--face);
}

.hist-side .edits {
    margin: 4px 2px 3px;
    gap: 4px;
}

.hist-main {
    flex: 1;
    min-width: 0;
    display: flex;
    flex-direction: column;
    align-items: stretch;
    border: 2px solid #000;
    border-top-width: 1px;
    background: var(--face);
}

.hist-main h3 {
    align-self: center;
    margin: 3px 0 0 2px;
    padding: 1px 2px 0;
    border: 1px solid #000;
    background: #b2fffb;
    box-shadow: 2px 2px 0 #6b8a8a;
    font-style: italic;
    line-height: 20px;
}

.bars,
.bins {
    display: flex;
    padding: 0 14px 0 4px;
}

.bars {
    flex: 1;
    align-items: flex-end;
    border-bottom: 4px solid #000;
}

.bars div {
    flex: 1;
    width: 0;
    display: flex;
    flex-direction: column;
    align-items: center;
    line-height: 14px;
}

.bars i {
    width: 100%;
    background: #ff1a1a;
    border: solid #000;
    border-width: 1px 0 0 1px;
}

.bars .zero {
    color: #e02020;
}

.bars .zero i {
    border: 0;
}

.bars .top i {
    background: #ffff20;
    border-right-width: 1px;
}

.bins {
    margin: 2px 0 6px;
}

.bins div {
    flex: 1;
    height: 29px;
    display: flex;
    justify-content: center;
    background: #ff1a1a;
    border: solid #000;
    border-width: 1px 0 1px 1px;
}

.bins .top {
    background: #ffff20;
    border-right-width: 1px;
}

.bins pre {
    padding-top: 2px;
    line-height: 15px;
}

.histogram .pale {
    background: #82b5b8;
}

.histogram .pale b {
    margin-right: 40px;
}

.hist-opts {
    height: 64px;
    display: flex;
    gap: 4px;
    border-top: 2px solid #000;
}

.hist-opts .list {
    flex: none;
    width: 73px;
    overflow: hidden;
}

.resolution {
    flex: 1;
    padding: 2px 2px 3px;
    border-left: 1px solid #000;
    display: flex;
    flex-direction: column;
}

.resolution label {
    padding-right: 5px;
    text-align: center;
}

.resolution output {
    padding: 5px 0 0 22px;
    line-height: 18px;
}

.resolution input {
    width: 100%;
    height: 16px;
    margin-top: auto;
    background: #82b5b8;
    border-color: var(--dark) var(--light) var(--light) var(--dark);
}

.resolution input::-webkit-slider-thumb {
    appearance: none;
    width: 30px;
    height: 12px;
    background: linear-gradient(90deg, var(--face) 13px, var(--dark) 13px, var(--light) 15px, var(--face) 15px);
    border: 1px solid;
    border-color: var(--light) var(--dark) var(--dark) var(--light);
}

.sash {
    height: 8px;
    border: solid var(--teal-dark);
    border-width: 1px 0;
    border-top-color: var(--teal-light);
    margin-bottom: 1px;
    display: flex;
    justify-content: flex-end;
    padding-right: 10px;
}

.sash i {
    width: 10px;
    border: 1px solid;
    border-color: var(--teal-light) var(--teal-dark) var(--teal-dark) var(--teal-light);
}

.board {
    position: relative;
    height: 206px;
    margin: 0 3px 0 4px;
    border: 1px solid #000;
    box-shadow: 2px 2px 0 var(--teal-light), 0 -2px 0 var(--teal-dark);
    display: flex;
    justify-content: center;
    align-items: flex-start;
    padding-top: 15px;
}

.board .focus {
    position: absolute;
    left: 163px;
    top: 12px;
}

.board .dot {
    position: absolute;
    left: 267px;
    top: 18px;
    width: 4px;
    height: 4px;
    background: #c818e0;
}

.stubs {
    margin: 2px 4px 0;
    display: flex;
    gap: 4px;
    height: 9px;
}

.stubs i {
    width: 30px;
    height: 7px;
    background: var(--face);
    border: 2px solid;
    border-color: transparent var(--dark) var(--dark) var(--light);
    border-top: 0;
}

.stubs i:nth-last-child(-n+2) {
    width: 38px;
}

.stubs b {
    flex: 1;
    background: var(--face);
    border: 1px solid #000;
    border-top: 0;
}

.histogram > .wide {
    margin-top: auto;
    height: 25px;
    font-weight: normal;
    outline: 1px solid #000;
}

/* input method bar */
.ime {
    position: absolute;
    right: 3px;
    top: 1035px;
    height: 24px;
    width: 155px;
    display: flex;
    align-items: center;
    gap: 8px;
    background: #fff;
    box-shadow: 0 0 3px rgba(0, 0, 0, 0.5);
    font: bold 15px/20px "Noto Sans CJK SC", sans-serif;
    color: #3c4456;
}

.ime svg:first-child {
    margin: 0 -3px 0 -8px;
}

/* taskbar */
.taskbar {
    flex: none;
    height: 40px;
    display: flex;
    background: #101010;
    color: #fff;
    font: 13px/20px var(--ui);
}

.taskbar button {
    border: 0;
    background: none;
}

.start {
    width: 51px;
    padding-left: 16px;
}

.taskbar .start {
    padding-left: 16px;
}

.tasks {
    flex: 1;
    min-width: 0;
    display: flex;
}

.tasks button {
    flex: 1;
    min-width: 0;
    position: relative;
    display: flex;
    align-items: center;
    gap: 4px;
    padding: 0 0 2px 7px;
    white-space: nowrap;
}

.tasks svg {
    width: 24px;
    height: 24px;
}

.tasks button::after {
    content: "";
    position: absolute;
    left: 4px;
    right: 4px;
    bottom: 0;
    height: 2px;
    background: #a6d8ff;
}

.tasks .current {
    background: #333;
}

.tasks .current::after {
    left: 0;
    right: 0;
}

.tray {
    width: 282px;
    padding: 0 16px 0 8px;
    display: flex;
    align-items: center;
    justify-content: space-between;
}

.tray time {
    padding: 0 6px;
    text-align: center;
    line-height: 19px;
}
```
